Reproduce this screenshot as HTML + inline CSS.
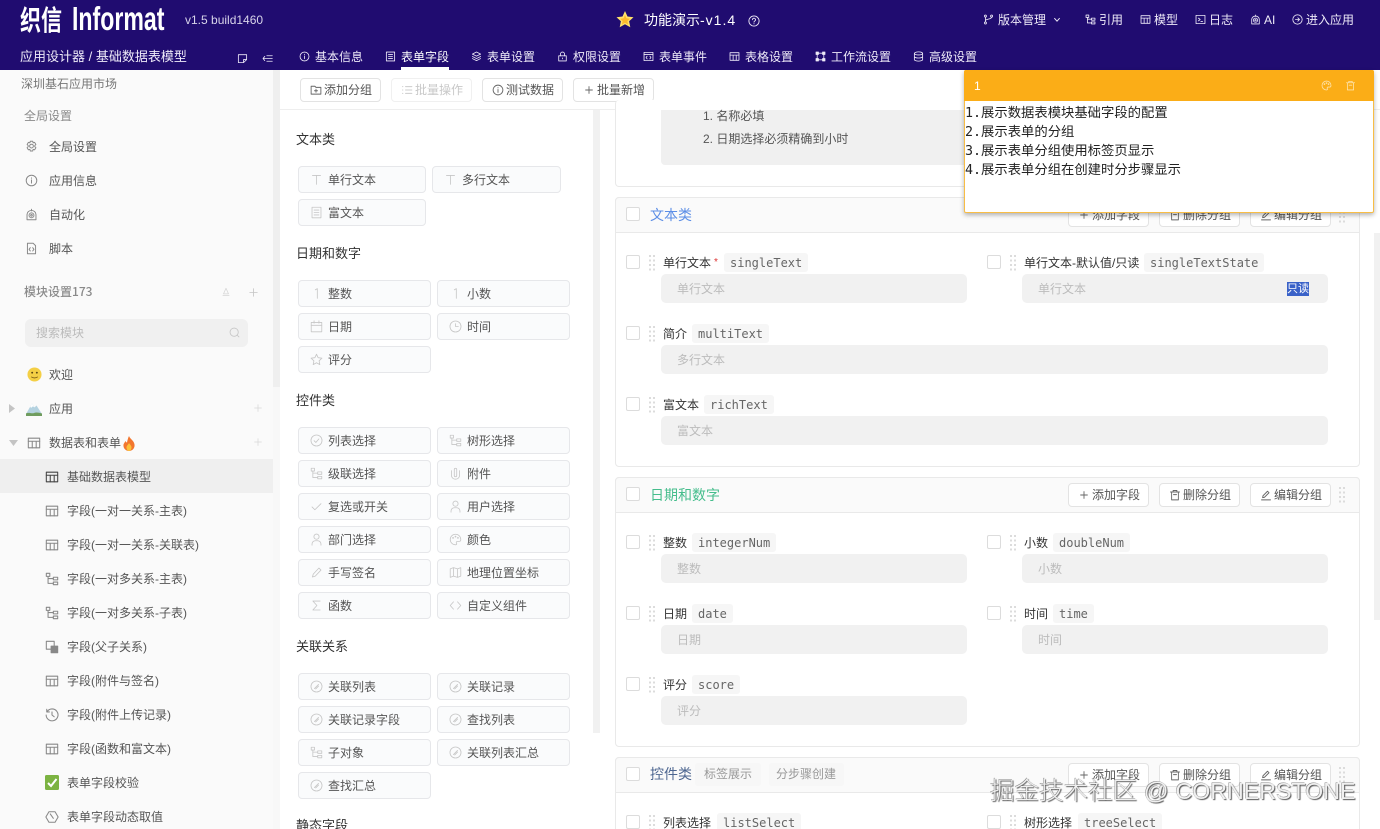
<!DOCTYPE html>
<html lang="zh"><head><meta charset="utf-8"><title>织信 Informat</title>
<style>
*{box-sizing:border-box}
html,body{margin:0;padding:0;width:1380px;height:829px;overflow:hidden;background:#fff}
body{position:relative;font:12px/20px "Liberation Sans","Noto Sans CJK SC",sans-serif;color:#555}
.a{position:absolute}
.t{position:absolute;white-space:nowrap;height:20px;line-height:20px}
.i{position:absolute;fill:none;stroke:currentColor;stroke-width:1.2;stroke-linecap:round;stroke-linejoin:round;overflow:visible}
.w{color:#eeeaf8}
.s{color:#555}
.sg{color:#8a8a8a}
.ic{color:#888}
.c{position:absolute;height:27px;line-height:27px;background:#fafbfc;border:1px solid #e6e7ea;border-radius:4px;color:#555;padding-left:29px;white-space:nowrap}
.c svg{position:absolute;left:11px;top:6px;width:13px;height:13px;color:#c6c6c6;stroke-width:1}
.b{position:absolute;width:81px;height:24px;line-height:22px;background:#fff;border:1px solid #e3e3e3;border-radius:4px;color:#555;white-space:nowrap;padding-left:23px}
.b svg{position:absolute;left:9px;top:5px;width:12px;height:12px;color:#666}
.h{position:absolute;color:#333;white-space:nowrap;height:20px;line-height:20px;left:296px;font-size:13px}
.card{position:absolute;left:615px;width:745px;border:1px solid #e9e9e9;border-radius:4px;background:#fff}
.ch{position:absolute;left:615px;width:745px;height:36px;background:#fafafa;border:1px solid #e9e9e9;border-radius:4px 4px 0 0}
.cb{position:absolute;width:14px;height:14px;border:1px solid #dcdcdc;border-radius:2px;background:#fff}
.l{position:absolute;color:#333;white-space:nowrap;height:20px;line-height:20px;margin-top:1px}
.tag{position:absolute;height:19px;line-height:21px;background:#f6f6f6;border-radius:3px;padding:0 6px;font-family:"DejaVu Sans Mono","Liberation Mono",monospace;font-size:12px;color:#666;white-space:nowrap}
.in{position:absolute;width:306px;height:29px;line-height:31px;background:#f1f1f1;border-radius:5px;padding-left:16px;color:#bcbcbc;white-space:nowrap}
.d{position:absolute;width:6px;height:16px;fill:#dcdcdc}
.ti{position:absolute;font-size:14px;height:20px;line-height:20px;white-space:nowrap;left:650px}
.m{position:absolute;left:965px;font-family:"DejaVu Sans Mono","Noto Sans CJK SC",monospace;font-size:13.33px;line-height:19px;height:19px;color:#222;white-space:nowrap}
</style></head><body>
<svg width="0" height="0" style="position:absolute">
<symbol id="table" viewBox="0 0 16 16"><rect x="1.500" y="2.500" width="13" height="11"/><path d="M1.500 6h13M6 6v7.500M10.500 6v7.500"/></symbol>
<symbol id="info" viewBox="0 0 16 16"><circle cx="8" cy="8" r="6.500"/><path d="M8 7.200v4M8 4.800v.4"/></symbol>
<symbol id="gear" viewBox="0 0 16 16"><path d="M6.500 1h3l.5 2 1.800-.6 1.600 2.600-1.400 1.500.0 1 1.400 1.500-1.600 2.600-1.800-.6-.5 2h-3l-.5-2-1.800.6L2.600 9 4 7.500v-1L2.600 5l1.600-2.600 1.800.6z" transform="translate(0 .5)"/><circle cx="8" cy="7.500" r="2.300"/></symbol>
<symbol id="robot" viewBox="0 0 16 16"><path d="M8 1.500v2M2.500 14.500V8a5.500 5 0 0 1 11 0v6.500z"/><circle cx="8" cy="9" r="3"/><circle cx="8" cy="9" r="1"/></symbol>
<symbol id="script" viewBox="0 0 16 16"><path d="M3 1.500h7l3 3v10H3z"/><path d="M6.500 7L5 9l1.500 2M9.500 7L11 9l-1.500 2"/></symbol>
<symbol id="tree" viewBox="0 0 16 16"><rect x="1.500" y="1.500" width="4" height="3.500"/><rect x="9.500" y="6" width="5" height="3"/><rect x="9.500" y="11.500" width="5" height="3"/><path d="M3.500 5v8h6M3.500 7.500h6"/></symbol>
<symbol id="link" viewBox="0 0 16 16"><circle cx="8" cy="8" r="6.800"/><path d="M5.500 10.500l5-5M7 11l3.500-3.500"/></symbol>
<symbol id="t" viewBox="0 0 16 16"><path d="M3 3h10M8 3v11"/></symbol>
<symbol id="doc" viewBox="0 0 16 16"><rect x="2.500" y="1.500" width="11" height="13"/><path d="M5 5h6M5 8h6M5 11h6"/></symbol>
<symbol id="one" viewBox="0 0 16 16"><path d="M6.500 3.500L9 2v12"/></symbol>
<symbol id="cal" viewBox="0 0 16 16"><rect x="1.500" y="3" width="13" height="11.500"/><path d="M1.500 6.500h13M5 1v3M11 1v3"/></symbol>
<symbol id="clock" viewBox="0 0 16 16"><circle cx="8" cy="8" r="6.800"/><path d="M8 4.500V8h3.500"/></symbol>
<symbol id="star" viewBox="0 0 16 16"><path d="M8 1.500l2 4.300 4.700.6-3.500 3.200.9 4.700L8 12l-4.100 2.300.9-4.700L1.300 6.400 6 5.800z"/></symbol>
<symbol id="checkc" viewBox="0 0 16 16"><circle cx="8" cy="8" r="6.800"/><path d="M5 8.200l2.200 2.200L11 6"/></symbol>
<symbol id="clip" viewBox="0 0 16 16"><path d="M3 4.500v6a5 4.500 0 0 0 10 0v-6"/><path d="M6.500 3v7.500a1.500 1.500 0 0 0 3 0V3a1.500 1.500 0 0 0-3 0"/></symbol>
<symbol id="check" viewBox="0 0 16 16"><path d="M2.500 8.500L6 12l7.500-7.500"/></symbol>
<symbol id="user" viewBox="0 0 16 16"><circle cx="8" cy="4.500" r="3.200"/><path d="M2.500 15v-1.500a4 4 0 0 1 4-4h3a4 4 0 0 1 4 4V15"/></symbol>
<symbol id="palette" viewBox="0 0 16 16"><path d="M8 1.500a6.500 6.500 0 1 0 0 13c1.600 0 1.800-1.200 1.200-2-.7-1 0-2.200 1.200-2.200h2.200c1.100 0 1.900-.9 1.900-2.300 0-3.700-2.900-6.500-6.500-6.500z"/><circle cx="5" cy="6" r=".6"/><circle cx="8" cy="4.500" r=".6"/><circle cx="11" cy="6" r=".6"/></symbol>
<symbol id="pen" viewBox="0 0 16 16"><path d="M3 13.500l1-3.500 7-7.500 2.500 2.500-7 7.500z"/></symbol>
<symbol id="map" viewBox="0 0 16 16"><path d="M1.500 3.500l4-1.500 5 1.500 4-1.500v10.500l-4 1.500-5-1.500-4 1.500zM5.500 2v10.500M10.500 3.500V14"/></symbol>
<symbol id="sigma" viewBox="0 0 16 16"><path d="M12.500 2.500h-9L8.500 8l-5 5.500h9"/></symbol>
<symbol id="code" viewBox="0 0 16 16"><path d="M5.500 3.500L1.500 8l4 4.500M10.500 3.500l4 4.500-4 4.500"/></symbol>
<symbol id="plus" viewBox="0 0 16 16"><path d="M8 2.500v11M2.500 8h11"/></symbol>
<symbol id="plus2" viewBox="0 0 16 16"><path d="M8 3.500v9M3.500 8h9"/></symbol>
<symbol id="trash" viewBox="0 0 16 16"><path d="M2 4h12M5.500 4V2h5v2M3.500 4v10.500h9V4M6 7.500h4"/></symbol>
<symbol id="edit" viewBox="0 0 16 16"><path d="M2 14.500h12M3.500 11.500l.5-2.500 6-6 2 2-6 6z"/></symbol>
<symbol id="folder" viewBox="0 0 16 16"><path d="M1.500 3h5l1.500 1.500h6.500v9h-13zM8 7v4M6 9h4"/></symbol>
<symbol id="list" viewBox="0 0 16 16"><path d="M6 3.500h8.500M6 8h8.500M6 12.500h8.500M2 3.500h.5M2 8h.5M2 12.500h.5"/></symbol>
<symbol id="search" viewBox="0 0 16 16"><circle cx="7.500" cy="7.500" r="6"/><path d="M12 12l2.500 2.500"/></symbol>
<symbol id="note" viewBox="0 0 16 16"><path d="M2 2.500h12v7l-4.500 4.500H2zM14 9.500H9.500V14"/></symbol>
<symbol id="fold" viewBox="0 0 16 16"><path d="M7 4h8M1.500 8h13.500M7 12h8M4 5L1.500 8 4 11"/></symbol>
<symbol id="form" viewBox="0 0 16 16"><rect x="2" y="1.500" width="12" height="13"/><path d="M5 5h6M5 8h6M5 11h6"/></symbol>
<symbol id="layers" viewBox="0 0 16 16"><path d="M8 1.500L14 4.500 8 7.500 2 4.500zM2 8l6 3 6-3M2 11l6 3 6-3"/></symbol>
<symbol id="lock" viewBox="0 0 16 16"><rect x="2.500" y="7" width="11" height="7.500"/><path d="M5 7V4.500a3 3 0 0 1 6 0V7M8 10v1.500"/></symbol>
<symbol id="event" viewBox="0 0 16 16"><rect x="1.500" y="2" width="13" height="12"/><path d="M1.500 5h13M6 7.500l-1.500 2 1.500 2M10 7.500l1.500 2-1.500 2"/></symbol>
<symbol id="flow" viewBox="0 0 16 16"><rect x="1.500" y="1.500" width="3.500" height="3.500" fill="currentColor"/><rect x="11" y="1.500" width="3.500" height="3.500" fill="currentColor"/><rect x="1.500" y="11" width="3.500" height="3.500" fill="currentColor"/><rect x="11" y="11" width="3.500" height="3.500" fill="currentColor"/><path d="M5 3.200h6M5 12.800h6M3.200 5v6M12.800 5v6"/></symbol>
<symbol id="db" viewBox="0 0 16 16"><ellipse cx="8" cy="3.500" rx="6" ry="2.200"/><path d="M2 3.500v9c0 1.200 2.700 2.200 6 2.200s6-1 6-2.200v-9M2 8c0 1.200 2.700 2.200 6 2.200s6-1 6-2.200"/></symbol>
<symbol id="branch" viewBox="0 0 16 16"><circle cx="3.500" cy="3" r="1.500"/><circle cx="3.500" cy="13" r="1.500"/><circle cx="12.500" cy="3" r="1.500"/><path d="M3.500 4.500v7M3.500 10c0-3 9-2 9-5.500"/></symbol>
<symbol id="term" viewBox="0 0 16 16"><rect x="1.500" y="2" width="13" height="12"/><path d="M5 6l2.500 2L5 10M8.500 11H11"/></symbol>
<symbol id="enter" viewBox="0 0 16 16"><circle cx="8" cy="8" r="6.800"/><path d="M5 8h6M8.500 5.500L11 8l-2.500 2.500"/></symbol>
<symbol id="help" viewBox="0 0 16 16"><circle cx="8" cy="8" r="6.800"/><path d="M6 6.300a2 2 0 1 1 3 1.700c-.7.400-1 .8-1 1.500M8 11.500v.3"/></symbol>
<symbol id="history" viewBox="0 0 16 16"><path d="M2.500 4a6.800 6.800 0 1 1-1.200 4M2 1.500V4.500h3M8 4.500V8l2.500 2"/></symbol>
<symbol id="parent" viewBox="0 0 16 16"><rect x="1.500" y="1.500" width="9" height="9"/><rect x="7" y="7" width="7.500" height="7.500" fill="currentColor"/></symbol>
<symbol id="hex" viewBox="0 0 16 16"><path d="M4.500 2h7L15 8l-3.500 6h-7L1 8z"/><path d="M6 4.500l3.500 5"/></symbol>
<symbol id="bell" viewBox="0 0 16 16"><path d="M8 2L4 11h8zM3 13.500h10"/></symbol>
<symbol id="drag" viewBox="0 0 6 16"><rect x="0" y="0" width="2" height="2"/><rect x="4" y="0" width="2" height="2"/><rect x="0" y="4.500" width="2" height="2"/><rect x="4" y="4.500" width="2" height="2"/><rect x="0" y="9" width="2" height="2"/><rect x="4" y="9" width="2" height="2"/><rect x="0" y="13.500" width="2" height="2"/><rect x="4" y="13.500" width="2" height="2"/></symbol>
</svg>

<!-- header -->
<div class="a" style="left:0;top:0;width:1380px;height:70px;background:#200c70"></div>
<div class="a" style="left:20px;top:2px;height:34px;line-height:34px;font-size:28px;font-weight:700;color:#fff;white-space:nowrap;transform:scaleX(.75);transform-origin:0 50%;font-family:'Noto Sans CJK SC',sans-serif">织信</div>
<div class="a" style="left:72px;top:0;height:38px;line-height:38px;font-size:33px;font-weight:700;color:#fff;white-space:nowrap;transform:scaleX(.70);transform-origin:0 50%">Informat</div>
<div class="t" style="left:185px;top:10px;color:#d8d4ea">v1.5 build1460</div>
<svg class="a" style="left:616px;top:11px;width:18px;height:18px" viewBox="0 0 18 18"><path d="M9 0l2.500 5.500L17.500 6.300l-4.400 4 1.200 5.900L9 13.200l-5.300 3 1.200-5.900-4.400-4L6.500 5.500z" fill="#ffe26a"/><path d="M9 4l1.500 3.300 3.500.4-2.600 2.400.7 3.500L9 11.800 5.900 13.600l.7-3.500L4 7.700l3.500-.4z" fill="#fdb92c"/></svg>
<div class="t" style="left:644px;top:10px;font-size:14px;color:#fff">功能演示<span style="letter-spacing:1px">-v1.4</span></div>
<svg class="i w" style="left:748px;top:15px;width:12px;height:12px"><use href="#help"/></svg>

<svg class="i w" style="left:983px;top:14px;width:11px;height:11px"><use href="#branch"/></svg><div class="t w" style="left:998px;top:10px">版本管理</div>
<svg class="i w" style="left:1054px;top:18px;width:6px;height:4px" viewBox="0 0 7 5"><path d="M.5 .5L3.500 4 6.500 .5"/></svg>
<svg class="i w" style="left:1085px;top:14px;width:11px;height:11px"><use href="#tree"/></svg><div class="t w" style="left:1099px;top:10px">引用</div>
<svg class="i w" style="left:1140px;top:14px;width:11px;height:11px"><use href="#table"/></svg><div class="t w" style="left:1154px;top:10px">模型</div>
<svg class="i w" style="left:1195px;top:14px;width:11px;height:11px"><use href="#term"/></svg><div class="t w" style="left:1209px;top:10px">日志</div>
<svg class="i w" style="left:1250px;top:14px;width:11px;height:11px"><use href="#robot"/></svg><div class="t w" style="left:1264px;top:10px">AI</div>
<svg class="i w" style="left:1292px;top:14px;width:11px;height:11px"><use href="#enter"/></svg><div class="t w" style="left:1306px;top:10px">进入应用</div>

<div class="t w" style="left:20px;top:47px;font-size:13px">应用设计器 / 基础数据表模型</div>
<svg class="i w" style="left:237px;top:53px;width:11px;height:11px"><use href="#note"/></svg>
<svg class="i w" style="left:262px;top:53px;width:11px;height:11px"><use href="#fold"/></svg>
<svg class="i w" style="left:299px;top:51px;width:11px;height:11px"><use href="#info"/></svg><div class="t w" style="left:315px;top:47px">基本信息</div>
<svg class="i w" style="left:385px;top:51px;width:11px;height:11px"><use href="#form"/></svg><div class="t" style="left:401px;top:47px;color:#fff">表单字段</div>
<div class="a" style="left:401px;top:67px;width:48px;height:3px;background:#fff"></div>
<svg class="i w" style="left:471px;top:51px;width:11px;height:11px"><use href="#layers"/></svg><div class="t w" style="left:487px;top:47px">表单设置</div>
<svg class="i w" style="left:557px;top:51px;width:11px;height:11px"><use href="#lock"/></svg><div class="t w" style="left:573px;top:47px">权限设置</div>
<svg class="i w" style="left:643px;top:51px;width:11px;height:11px"><use href="#event"/></svg><div class="t w" style="left:659px;top:47px">表单事件</div>
<svg class="i w" style="left:729px;top:51px;width:11px;height:11px"><use href="#table"/></svg><div class="t w" style="left:745px;top:47px">表格设置</div>
<svg class="i w" style="left:815px;top:51px;width:11px;height:11px"><use href="#flow"/></svg><div class="t w" style="left:831px;top:47px">工作流设置</div>
<svg class="i w" style="left:913px;top:51px;width:11px;height:11px"><use href="#db"/></svg><div class="t w" style="left:929px;top:47px">高级设置</div>

<!-- sidebar -->
<div class="a" style="left:0;top:70px;width:273px;height:759px;background:#fafafa"></div>
<div class="a" style="left:273px;top:70px;width:7px;height:759px;background:#f8f8f8"></div>
<div class="a" style="left:273px;top:70px;width:7px;height:317px;background:#efefef"></div>
<div class="t" style="left:21px;top:74px;color:#777">深圳基石应用市场</div>
<div class="t sg" style="left:24px;top:106px">全局设置</div>
<svg class="i ic" style="left:25px;top:140px;width:13px;height:13px"><use href="#gear"/></svg><div class="t s" style="left:49px;top:137px">全局设置</div>
<svg class="i ic" style="left:25px;top:174px;width:13px;height:13px"><use href="#info"/></svg><div class="t s" style="left:49px;top:171px">应用信息</div>
<svg class="i ic" style="left:25px;top:208px;width:13px;height:13px"><use href="#robot"/></svg><div class="t s" style="left:49px;top:205px">自动化</div>
<svg class="i ic" style="left:25px;top:242px;width:13px;height:13px"><use href="#script"/></svg><div class="t s" style="left:49px;top:239px">脚本</div>
<div class="t sg" style="left:24px;top:282px;font-family:'Noto Sans CJK SC',sans-serif;font-weight:500">模块设置173</div>
<svg class="i" style="left:221px;top:287px;width:10px;height:10px;color:#d5d5d5"><use href="#bell"/></svg>
<svg class="i" style="left:248px;top:287px;width:11px;height:11px;color:#c5c5c5"><use href="#plus"/></svg>
<div class="a" style="left:25px;top:319px;width:223px;height:28px;background:#f0f0f0;border-radius:6px"></div>
<div class="t" style="left:36px;top:323px;color:#bbb">搜索模块</div>
<svg class="i" style="left:229px;top:327px;width:11px;height:11px;color:#c5c5c5"><use href="#search"/></svg>
<svg class="a" style="left:27px;top:367px;width:15px;height:15px" viewBox="0 0 16 16"><circle cx="8" cy="8" r="7.500" fill="#f4cf45"/><circle cx="5.500" cy="6" r="1" fill="#5a4310"/><circle cx="10.500" cy="6" r="1" fill="#5a4310"/><path d="M4.500 10.500c2 1.500 5 1.500 7 0" fill="none" stroke="#7a5a14" stroke-width=".9"/></svg>
<div class="t s" style="left:49px;top:365px">欢迎</div>
<svg class="a" style="left:9px;top:404px;width:6px;height:9px" viewBox="0 0 6 9"><path d="M0 0l6 4.500L0 9z" fill="#c4c4c4"/></svg>
<svg class="a" style="left:26px;top:401px;width:16px;height:15px" viewBox="0 0 16 15"><path d="M0 13L6 2.500l2.500 4 2-2 5.500 8.500z" fill="#b4d2e0"/><path d="M6 2.500l2 3.500-1.500-.5L5 7 4.300 5.500z" fill="#fff"/><path d="M0 12.500c3-1.500 6 .5 8-.5s5-.5 8 .5V15H0z" fill="#6f9c5e"/></svg>
<div class="t s" style="left:49px;top:399px">应用</div>
<svg class="i" style="left:253px;top:403px;width:10px;height:10px;color:#d8d8d8"><use href="#plus"/></svg>
<svg class="a" style="left:9px;top:440px;width:9px;height:6px" viewBox="0 0 9 6"><path d="M0 0h9L4.500 6z" fill="#c4c4c4"/></svg>
<svg class="i ic" style="left:27px;top:436px;width:14px;height:14px"><use href="#table"/></svg>
<div class="t s" style="left:49px;top:433px">数据表和表单</div>
<svg class="a" style="left:122px;top:436px;width:14px;height:15px" viewBox="0 0 14 15"><path d="M7 0c1 3 5 4.500 5.500 8.500C13 12 10.500 15 7 15S1 12 1.500 8.500C2 7 3 6 3.500 5c.5 1 1 1.500 1.500 1.500C5.500 4 6 2 7 0z" fill="#f2762e"/><path d="M7 7c.8 1.500 2.500 2.500 2.500 4.500S8.300 15 7 15s-2.500-1.500-2.500-3.500S6.500 8.500 7 7z" fill="#fbc13a"/></svg>
<svg class="i" style="left:253px;top:437px;width:10px;height:10px;color:#d8d8d8"><use href="#plus"/></svg>
<div class="a" style="left:0;top:459px;width:273px;height:34px;background:#efefef"></div>
<svg class="i" style="left:45px;top:470px;width:14px;height:14px;color:#444"><use href="#table"/></svg><div class="t s" style="left:67px;top:467px">基础数据表模型</div>
<svg class="i ic" style="left:45px;top:504px;width:14px;height:14px"><use href="#table"/></svg><div class="t s" style="left:67px;top:501px">字段(一对一关系-主表)</div>
<svg class="i ic" style="left:45px;top:538px;width:14px;height:14px"><use href="#table"/></svg><div class="t s" style="left:67px;top:535px">字段(一对一关系-关联表)</div>
<svg class="i ic" style="left:45px;top:572px;width:14px;height:14px"><use href="#tree"/></svg><div class="t s" style="left:67px;top:569px">字段(一对多关系-主表)</div>
<svg class="i ic" style="left:45px;top:606px;width:14px;height:14px"><use href="#tree"/></svg><div class="t s" style="left:67px;top:603px">字段(一对多关系-子表)</div>
<svg class="i ic" style="left:45px;top:640px;width:14px;height:14px"><use href="#parent"/></svg><div class="t s" style="left:67px;top:637px">字段(父子关系)</div>
<svg class="i ic" style="left:45px;top:674px;width:14px;height:14px"><use href="#table"/></svg><div class="t s" style="left:67px;top:671px">字段(附件与签名)</div>
<svg class="i ic" style="left:45px;top:708px;width:14px;height:14px"><use href="#history"/></svg><div class="t s" style="left:67px;top:705px">字段(附件上传记录)</div>
<svg class="i ic" style="left:45px;top:742px;width:14px;height:14px"><use href="#table"/></svg><div class="t s" style="left:67px;top:739px">字段(函数和富文本)</div>
<svg class="a" style="left:45px;top:775px;width:14px;height:15px" viewBox="0 0 14 15"><rect width="14" height="15" rx="1.500" fill="#7cb342"/><path d="M3 8l3 3 5.500-7" fill="none" stroke="#fff" stroke-width="2"/></svg><div class="t s" style="left:67px;top:773px">表单字段校验</div>
<svg class="i ic" style="left:45px;top:810px;width:14px;height:14px"><use href="#hex"/></svg><div class="t s" style="left:67px;top:807px">表单字段动态取值</div>

<!-- toolbar -->
<div class="a" style="left:280px;top:109px;width:1100px;height:1px;background:#eee"></div>
<div class="b" style="left:300px;top:78px"><svg class="i"><use href="#folder"/></svg>添加分组</div>
<div class="b" style="left:391px;top:78px;border-color:#f0f0f0;color:#c8c8c8"><svg class="i" style="color:#ccc"><use href="#list"/></svg>批量操作</div>
<div class="b" style="left:482px;top:78px"><svg class="i"><use href="#info"/></svg>测试数据</div>
<div class="b" style="left:573px;top:78px"><svg class="i"><use href="#plus2"/></svg>批量新增</div>

<!-- left panel -->
<div class="a" style="left:593px;top:110px;width:7px;height:623px;background:#f1f1f1"></div>
<div class="h" style="top:130px">文本类</div>
<div class="c" style="left:298px;top:166px;width:128px"><svg class="i"><use href="#t"/></svg>单行文本</div>
<div class="c" style="left:432px;top:166px;width:129px"><svg class="i"><use href="#t"/></svg>多行文本</div>
<div class="c" style="left:298px;top:199px;width:128px"><svg class="i"><use href="#doc"/></svg>富文本</div>
<div class="h" style="top:244px">日期和数字</div>
<div class="c" style="left:298px;top:280px;width:133px"><svg class="i"><use href="#one"/></svg>整数</div>
<div class="c" style="left:437px;top:280px;width:133px"><svg class="i"><use href="#one"/></svg>小数</div>
<div class="c" style="left:298px;top:313px;width:133px"><svg class="i"><use href="#cal"/></svg>日期</div>
<div class="c" style="left:437px;top:313px;width:133px"><svg class="i"><use href="#clock"/></svg>时间</div>
<div class="c" style="left:298px;top:346px;width:133px"><svg class="i"><use href="#star"/></svg>评分</div>
<div class="h" style="top:391px">控件类</div>
<div class="c" style="left:298px;top:427px;width:133px"><svg class="i"><use href="#checkc"/></svg>列表选择</div>
<div class="c" style="left:437px;top:427px;width:133px"><svg class="i"><use href="#tree"/></svg>树形选择</div>
<div class="c" style="left:298px;top:460px;width:133px"><svg class="i"><use href="#tree"/></svg>级联选择</div>
<div class="c" style="left:437px;top:460px;width:133px"><svg class="i"><use href="#clip"/></svg>附件</div>
<div class="c" style="left:298px;top:493px;width:133px"><svg class="i"><use href="#check"/></svg>复选或开关</div>
<div class="c" style="left:437px;top:493px;width:133px"><svg class="i"><use href="#user"/></svg>用户选择</div>
<div class="c" style="left:298px;top:526px;width:133px"><svg class="i"><use href="#user"/></svg>部门选择</div>
<div class="c" style="left:437px;top:526px;width:133px"><svg class="i"><use href="#palette"/></svg>颜色</div>
<div class="c" style="left:298px;top:559px;width:133px"><svg class="i"><use href="#pen"/></svg>手写签名</div>
<div class="c" style="left:437px;top:559px;width:133px"><svg class="i"><use href="#map"/></svg>地理位置坐标</div>
<div class="c" style="left:298px;top:592px;width:133px"><svg class="i"><use href="#sigma"/></svg>函数</div>
<div class="c" style="left:437px;top:592px;width:133px"><svg class="i"><use href="#code"/></svg>自定义组件</div>
<div class="h" style="top:637px">关联关系</div>
<div class="c" style="left:298px;top:673px;width:133px"><svg class="i"><use href="#link"/></svg>关联列表</div>
<div class="c" style="left:437px;top:673px;width:133px"><svg class="i"><use href="#link"/></svg>关联记录</div>
<div class="c" style="left:298px;top:706px;width:133px"><svg class="i"><use href="#link"/></svg>关联记录字段</div>
<div class="c" style="left:437px;top:706px;width:133px"><svg class="i"><use href="#link"/></svg>查找列表</div>
<div class="c" style="left:298px;top:739px;width:133px"><svg class="i"><use href="#tree"/></svg>子对象</div>
<div class="c" style="left:437px;top:739px;width:133px"><svg class="i"><use href="#link"/></svg>关联列表汇总</div>
<div class="c" style="left:298px;top:772px;width:133px"><svg class="i"><use href="#link"/></svg>查找汇总</div>
<div class="h" style="top:816px">静态字段</div>

<!-- main scrollbar -->
<div class="a" style="left:1374px;top:233px;width:6px;height:387px;background:#f1f1f1"></div>

<!-- card 0 -->
<div class="card" style="top:100px;height:87px;border-top:none"></div>
<div class="a" style="left:661px;top:110px;width:667px;height:55px;background:#f0f0f0;border-radius:0 0 4px 4px"></div>
<div class="t" style="left:703px;top:106px;color:#555">1. 名称必填</div>
<div class="t" style="left:703px;top:129px;color:#555">2. 日期选择必须精确到小时</div>

<!-- card 1 -->
<div class="card" style="top:197px;height:270px"></div>
<div class="ch" style="top:197px"></div>
<div class="cb" style="left:626px;top:207px"></div>
<div class="ti" style="top:205px;color:#5c8ee6">文本类</div>
<div class="b" style="left:1068px;top:203px"><svg class="i"><use href="#plus2"/></svg>添加字段</div>
<div class="b" style="left:1159px;top:203px"><svg class="i"><use href="#trash"/></svg>删除分组</div>
<div class="b" style="left:1250px;top:203px"><svg class="i"><use href="#edit"/></svg>编辑分组</div>
<svg class="d" style="left:1339px;top:207px"><use href="#drag"/></svg>

<div class="cb" style="left:626px;top:255px"></div><svg class="d" style="left:649px;top:255px"><use href="#drag"/></svg>
<div class="l" style="left:663px;top:252px">单行文本<span style="color:#d33;font-size:10px;margin-left:3px;vertical-align:2px">*</span></div>
<div class="tag" style="left:724px;top:253px">singleText</div>
<div class="in" style="left:661px;top:274px">单行文本</div>
<div class="cb" style="left:987px;top:255px"></div><svg class="d" style="left:1010px;top:255px"><use href="#drag"/></svg>
<div class="l" style="left:1024px;top:252px">单行文本-默认值/只读</div>
<div class="tag" style="left:1144px;top:253px">singleTextState</div>
<div class="in" style="left:1022px;top:274px">单行文本</div>
<div class="a" style="left:1287px;top:282px;width:22px;height:14px;line-height:14px;background:#3a62c8;color:#fff;font-size:11px;text-align:center">只读</div>

<div class="cb" style="left:626px;top:326px"></div><svg class="d" style="left:649px;top:326px"><use href="#drag"/></svg>
<div class="l" style="left:663px;top:323px">简介</div>
<div class="tag" style="left:692px;top:324px">multiText</div>
<div class="in" style="left:661px;top:345px;width:667px">多行文本</div>

<div class="cb" style="left:626px;top:397px"></div><svg class="d" style="left:649px;top:397px"><use href="#drag"/></svg>
<div class="l" style="left:663px;top:394px">富文本</div>
<div class="tag" style="left:704px;top:395px">richText</div>
<div class="in" style="left:661px;top:416px;width:667px">富文本</div>

<!-- card 2 -->
<div class="card" style="top:477px;height:270px"></div>
<div class="ch" style="top:477px"></div>
<div class="cb" style="left:626px;top:487px"></div>
<div class="ti" style="top:485px;color:#45bd8c">日期和数字</div>
<div class="b" style="left:1068px;top:483px"><svg class="i"><use href="#plus2"/></svg>添加字段</div>
<div class="b" style="left:1159px;top:483px"><svg class="i"><use href="#trash"/></svg>删除分组</div>
<div class="b" style="left:1250px;top:483px"><svg class="i"><use href="#edit"/></svg>编辑分组</div>
<svg class="d" style="left:1339px;top:487px"><use href="#drag"/></svg>

<div class="cb" style="left:626px;top:535px"></div><svg class="d" style="left:649px;top:535px"><use href="#drag"/></svg>
<div class="l" style="left:663px;top:532px">整数</div>
<div class="tag" style="left:692px;top:533px">integerNum</div>
<div class="in" style="left:661px;top:554px">整数</div>
<div class="cb" style="left:987px;top:535px"></div><svg class="d" style="left:1010px;top:535px"><use href="#drag"/></svg>
<div class="l" style="left:1024px;top:532px">小数</div>
<div class="tag" style="left:1053px;top:533px">doubleNum</div>
<div class="in" style="left:1022px;top:554px">小数</div>

<div class="cb" style="left:626px;top:606px"></div><svg class="d" style="left:649px;top:606px"><use href="#drag"/></svg>
<div class="l" style="left:663px;top:603px">日期</div>
<div class="tag" style="left:692px;top:604px">date</div>
<div class="in" style="left:661px;top:625px">日期</div>
<div class="cb" style="left:987px;top:606px"></div><svg class="d" style="left:1010px;top:606px"><use href="#drag"/></svg>
<div class="l" style="left:1024px;top:603px">时间</div>
<div class="tag" style="left:1053px;top:604px">time</div>
<div class="in" style="left:1022px;top:625px">时间</div>

<div class="cb" style="left:626px;top:677px"></div><svg class="d" style="left:649px;top:677px"><use href="#drag"/></svg>
<div class="l" style="left:663px;top:674px">评分</div>
<div class="tag" style="left:692px;top:675px">score</div>
<div class="in" style="left:661px;top:696px">评分</div>

<!-- card 3 -->
<div class="card" style="top:757px;height:90px"></div>
<div class="ch" style="top:757px"></div>
<div class="cb" style="left:626px;top:767px"></div>
<div class="ti" style="top:764px;color:#4d6690">控件类</div>
<div class="a" style="left:695px;top:763px;width:66px;height:23px;line-height:23px;background:#f7f7f7;border-radius:3px;color:#999;padding-left:9px">标签展示</div>
<div class="a" style="left:769px;top:763px;width:75px;height:23px;line-height:23px;background:#f7f7f7;border-radius:3px;color:#999;padding-left:7px">分步骤创建</div>
<div class="b" style="left:1068px;top:763px"><svg class="i"><use href="#plus2"/></svg>添加字段</div>
<div class="b" style="left:1159px;top:763px"><svg class="i"><use href="#trash"/></svg>删除分组</div>
<div class="b" style="left:1250px;top:763px"><svg class="i"><use href="#edit"/></svg>编辑分组</div>
<svg class="d" style="left:1339px;top:767px"><use href="#drag"/></svg>
<div class="cb" style="left:626px;top:815px"></div><svg class="d" style="left:649px;top:815px"><use href="#drag"/></svg>
<div class="l" style="left:663px;top:812px">列表选择</div>
<div class="tag" style="left:717px;top:813px">listSelect</div>
<div class="cb" style="left:987px;top:815px"></div><svg class="d" style="left:1010px;top:815px"><use href="#drag"/></svg>
<div class="l" style="left:1024px;top:812px">树形选择</div>
<div class="tag" style="left:1078px;top:813px">treeSelect</div>

<!-- sticky note -->
<div class="a" style="left:964px;top:70px;width:410px;height:143px;background:#fff;border:1px solid #f8bd45;border-radius:2px;box-shadow:0 2px 5px rgba(0,0,0,.3)"></div>
<div class="a" style="left:964px;top:70px;width:410px;height:31px;background:#fbad17;border-radius:2px 2px 0 0"></div>
<div class="t" style="left:974px;top:76px;color:#fff">1</div>
<svg class="i" style="left:1321px;top:80px;width:11px;height:11px;color:#fde2a8"><use href="#palette"/></svg>
<svg class="i" style="left:1345px;top:80px;width:11px;height:11px;color:#fde2a8"><use href="#trash"/></svg>
<div class="m" style="top:104px">1.展示数据表模块基础字段的配置</div>
<div class="m" style="top:123px">2.展示表单的分组</div>
<div class="m" style="top:142px">3.展示表单分组使用标签页显示</div>
<div class="m" style="top:161px">4.展示表单分组在创建时分步骤显示</div>

<!-- watermark -->
<div class="a" style="left:990px;top:774px;height:34px;line-height:34px;font-size:24.500px;color:#f0f0f0;white-space:nowrap;text-shadow:1px 1px 1px #555,-.5px -.5px 0 #888;font-weight:300">掘金技术社区 @ <span style="font-size:23.200px">CORNERSTONE</span></div>
</body></html>
